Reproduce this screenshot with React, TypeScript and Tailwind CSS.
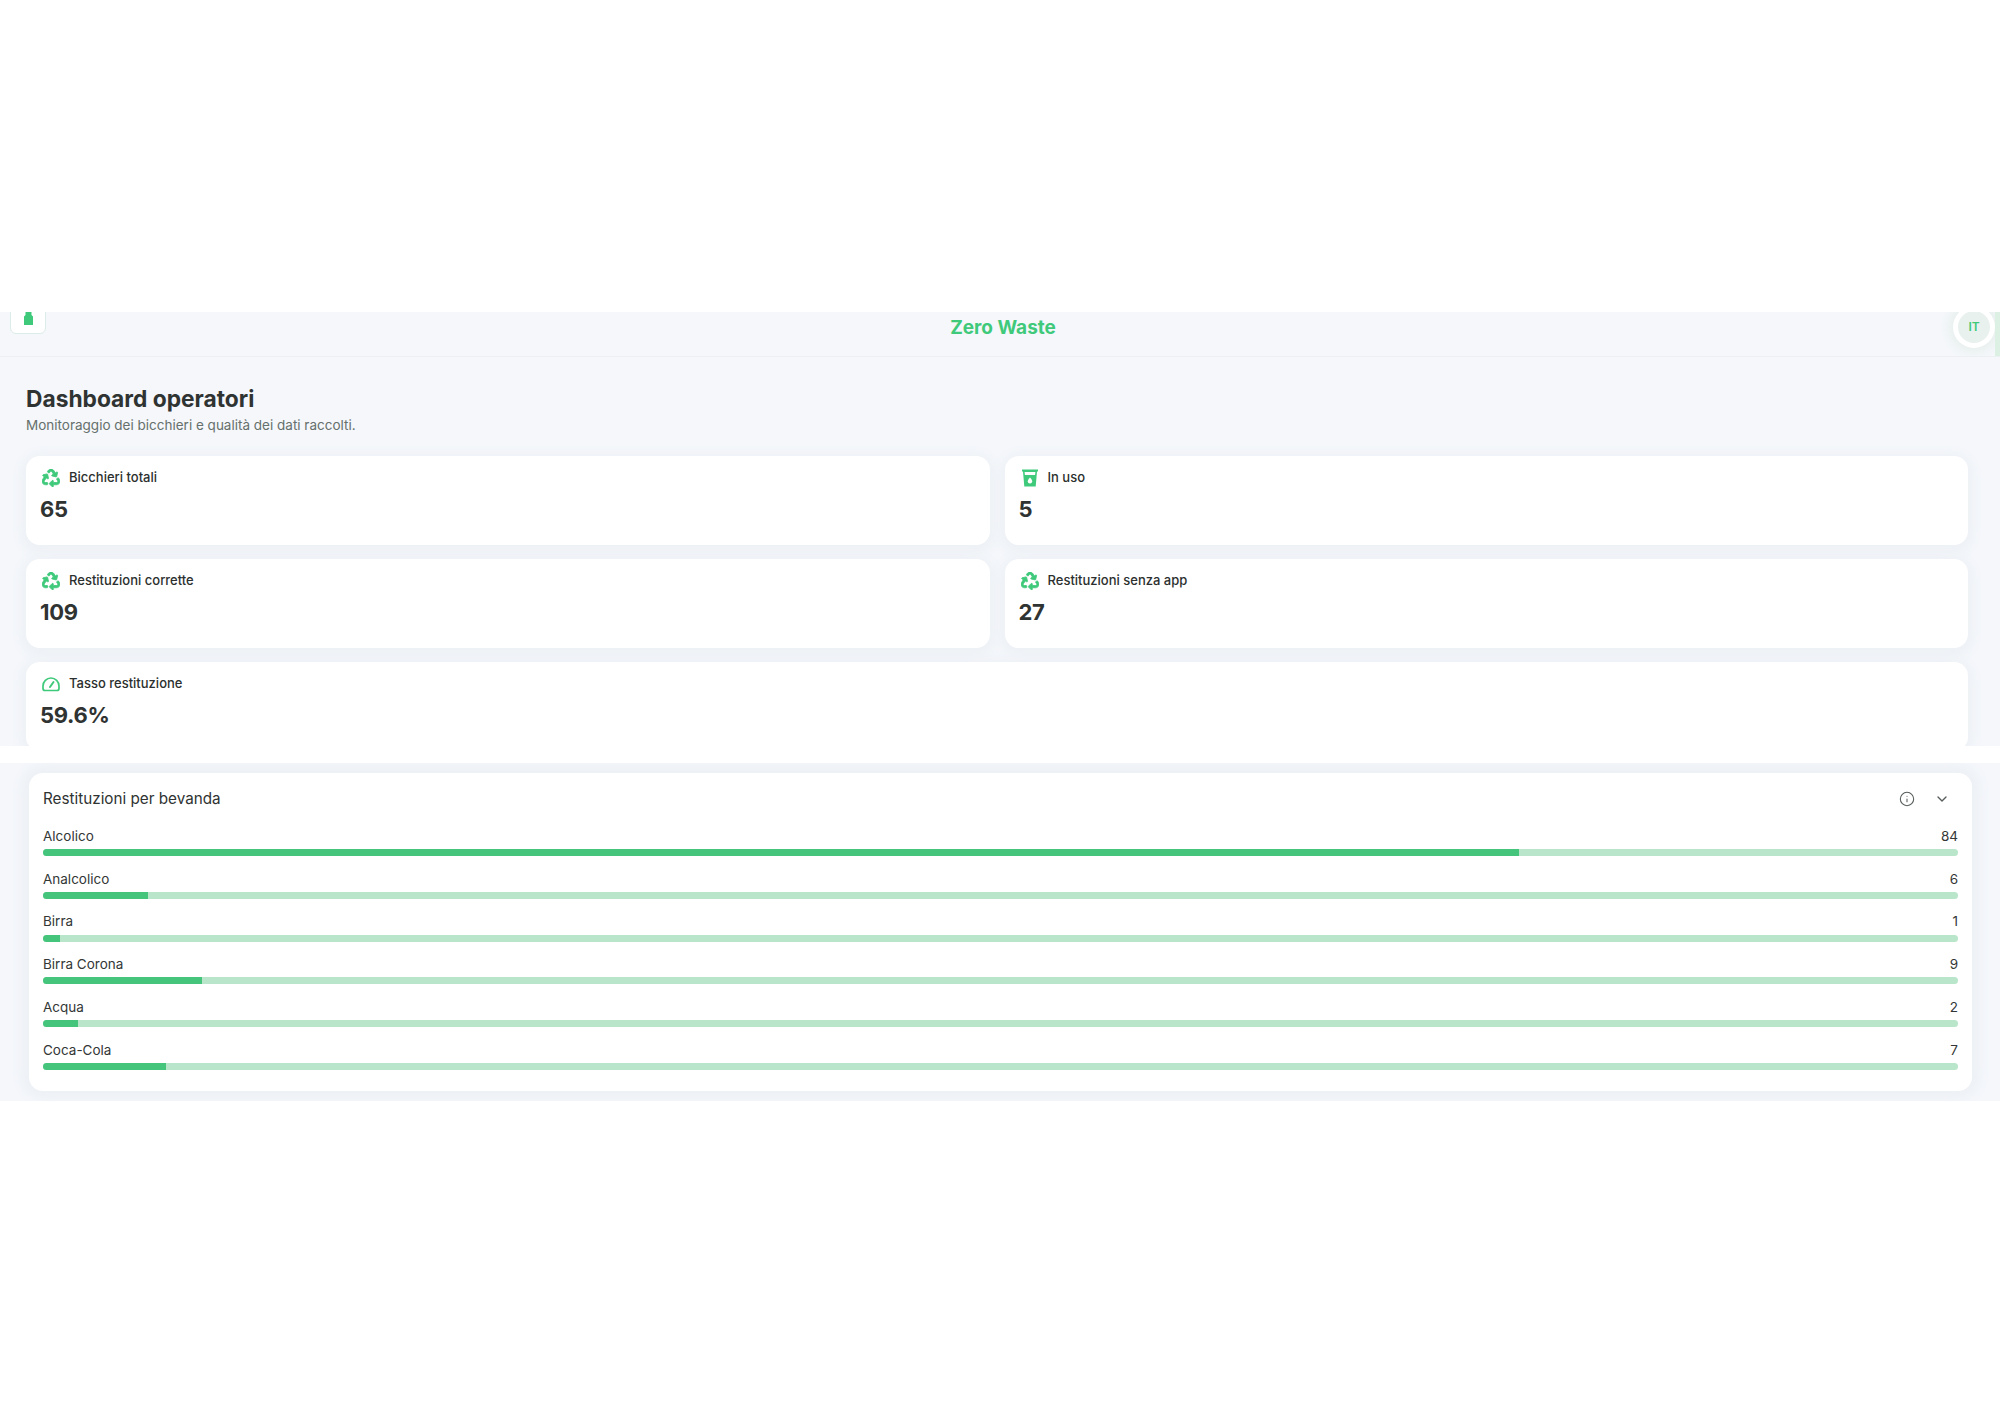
import { Info, ChevronDown } from 'lucide-react'
import { FaRecycle } from 'react-icons/fa'
import type { ReactNode } from 'react'

const font = { fontFamily: '"Inter", "Noto Sans", sans-serif' }

const CupIcon = () => (
  <svg width="18" height="18" viewBox="0 0 18 18" className="text-[#3fc97a]">
    <path d="M1 0.5h16v2h-1l-1.3 15H3.3L2 2.5H1z" fill="currentColor" />
    <path d="M3.6 3h10.8l-.3 3H3.9z" fill="#fff" />
    <path d="M9 8.5c1.4 1.6 2.2 2.6 2.2 3.8a2.2 2.2 0 0 1-4.4 0c0-1.2.8-2.2 2.2-3.8z" fill="#fff" />
  </svg>
)

const GaugeIcon = () => (
  <svg width="18" height="16" viewBox="0 0 18 16" fill="none" stroke="#3fc97a" strokeWidth="1.7" strokeLinecap="round" strokeLinejoin="round">
    <path d="M1 12.5V10a8 8 0 0 1 16 0v2.5a2 2 0 0 1-2 2H3a2 2 0 0 1-2-2z" />
    <path d="M8 11l3.5-5" strokeWidth="2" />
  </svg>
)

const BottleIcon = () => (
  <svg width="9" height="16" viewBox="0 0 9 16" className="text-[#3fc97a]">
    <path d="M1.5 0h6v6l1.5 1.5V16H0V7.5L1.5 6z" fill="currentColor" />
  </svg>
)

const recycle = <FaRecycle className="text-[18px] stroke-[#3fc97a] stroke-[24] text-[#3fc97a]" />

const StatCard = ({ icon, label, value, className }: { icon: ReactNode; label: string; value: string; className?: string }) => (
  <div className={`h-[89px] rounded-[14px] bg-white pl-[14px] pt-[13px] shadow-[0_3px_12px_5px_#edf1f5] ${className ?? ''}`}>
    <div className="flex h-[18px] items-center gap-[9px] pl-[2px]">
      <span className="flex w-[18px] justify-center">{icon}</span>
      <span className="text-[13px] font-medium text-[#2b2f2e]">{label}</span>
    </div>
    <div className="mt-[8px] text-[22px] font-bold leading-[28px] tracking-[-0.3px] text-[#2f3332]">{value}</div>
  </div>
)

const drinks = [
  { name: 'Alcolico', count: 84, pct: 77.1 },
  { name: 'Analcolico', count: 6, pct: 5.5 },
  { name: 'Birra', count: 1, pct: 0.9 },
  { name: 'Birra Corona', count: 9, pct: 8.3 },
  { name: 'Acqua', count: 2, pct: 1.85 },
  { name: 'Coca-Cola', count: 7, pct: 6.43 },
]

export default function App() {
  return (
    <div className="min-h-[1414px] bg-white pt-[312px]" style={font}>
      <section className="h-[434px] overflow-hidden bg-[#f5f7fb]">
        <header className="relative flex h-[45px] items-center justify-center overflow-hidden border-b border-[#edf0f3]">
          <div className="absolute left-[10px] top-[-16px] flex h-[38px] w-[36px] items-end justify-center rounded-[6px] border border-[#dcece6] bg-white pb-[8px]">
            <BottleIcon />
          </div>
          <span className="translate-x-[3px] -translate-y-[6px] text-[19px] font-bold text-[#3fc97a]">Zero Waste</span>
          <div className="absolute right-[5px] top-[-6px] flex h-[42px] w-[42px] items-center justify-center rounded-full border-[5px] border-white bg-[#e9f1ef] text-[12px] font-semibold text-[#3fc97a] shadow-[0_0_10px_5px_#e8f0ee]">
            IT
          </div>
          <div className="absolute right-0 top-0 h-full w-[5px] bg-[#dcf0e3]" />
        </header>
        <div className="px-[26px] pt-[28px]">
          <h1 className="text-[22.75px] font-bold leading-[28px] text-[#2f3332]">Dashboard operatori</h1>
          <p className="mt-[2px] text-[13.5px] leading-[20px] text-[#66706c]">Monitoraggio dei bicchieri e qualità dei dati raccolti.</p>
          <div className="mt-[21px] grid w-[1942px] grid-cols-2 gap-x-[15px] gap-y-[14px]">
            <StatCard icon={recycle} label="Bicchieri totali" value="65" />
            <StatCard icon={<CupIcon />} label="In uso" value="5" />
            <StatCard icon={recycle} label="Restituzioni corrette" value="109" />
            <StatCard icon={recycle} label="Restituzioni senza app" value="27" />
            <StatCard className="col-span-2" icon={<GaugeIcon />} label="Tasso restituzione" value="59.6%" />
          </div>
        </div>
      </section>

      <section className="mt-[17px] h-[338px] overflow-hidden bg-[#f5f7fb] pl-[29px] pt-[10px]">
        <div className="h-[318px] w-[1943px] rounded-[14px] bg-white px-[14px] pt-[14px] shadow-[0_0_12px_8px_#edf1f5]">
          <div className="flex h-[24px] items-center justify-between">
            <h2 className="text-[15.25px] text-[#2f3332]">Restituzioni per bevanda</h2>
            <div className="flex items-center gap-[19px] pr-[8px] text-[#565d5a]">
              <Info size={16} strokeWidth={1.6} />
              <ChevronDown size={16} strokeWidth={2} />
            </div>
          </div>
          <div className="mt-[15px] flex flex-col gap-[12.75px]">
            {drinks.map(d => (
              <div key={d.name}>
                <div className="flex h-[20px] items-center justify-between text-[13.5px] text-[#333736]">
                  <span>{d.name}</span>
                  <span>{d.count}</span>
                </div>
                <div className="mt-[3px] h-[7px] w-full overflow-hidden rounded-full bg-[#b9e6ca]">
                  <div className="h-full bg-[#45c57c]" style={{ width: `${d.pct}%` }} />
                </div>
              </div>
            ))}
          </div>
        </div>
      </section>
    </div>
  )
}
